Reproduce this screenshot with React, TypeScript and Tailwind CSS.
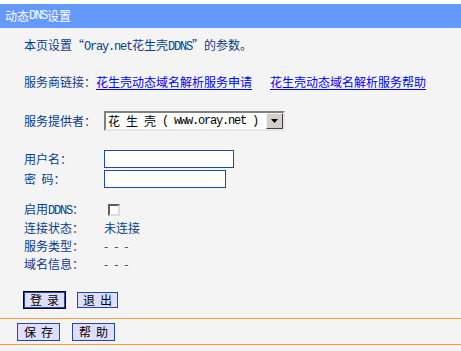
import React from 'react';

// half-width latin, like the router page's SimSun
const M: React.FC<{ children: React.ReactNode }> = ({ children }) => (
  <span className="text-[12px] whitespace-pre" style={{ fontFamily: '"Liberation Mono", monospace', letterSpacing: '-1.2px' }}>
    {children}
  </span>
);

const Label: React.FC<{ children: React.ReactNode }> = ({ children }) => (
  <div className="w-[80px] shrink-0 whitespace-nowrap">{children}</div>
);

const Btn: React.FC<{ text: string; focus?: boolean }> = ({ text, focus }) => (
  <div className={focus ? 'border border-black' : 'border border-transparent'}>
    <div className="w-[41px] h-[16px] border border-[#2346a8] bg-[#dedeff] text-black flex items-center justify-center whitespace-nowrap tracking-[5px] pl-[5px] leading-none">
      {text}
    </div>
  </div>
);

const BtnPlain: React.FC<{ text: string }> = ({ text }) => (
  <div className="w-[43px] h-[18px] border border-[#2346a8] bg-[#dedeff] text-black flex items-center justify-center whitespace-nowrap tracking-[5px] pl-[5px] leading-none">
    {text}
  </div>
);

const App: React.FC = () => {
  return (
    <div
      className="w-[461px] h-[351px] overflow-hidden bg-white pt-[4px] text-[12px] leading-[12px] text-[#0b3b8f]"
      style={{ fontFamily: '"Noto Sans CJK SC", "Liberation Sans", sans-serif' }}
    >
      <div className="h-[24px] bg-[#6699ff] text-white flex items-center pl-[5px]">
        动态<M>DNS</M>设置
      </div>

      <div className="h-[323px] bg-[#f4f4f4] flex flex-col">
        <div className="pl-[24px] mt-[11px] h-[12px] whitespace-nowrap">
          本页设置“<M>Oray.net</M>花生壳<M>DDNS</M>”的参数。
        </div>

        <div className="pl-[24px] mt-[25px] h-[12px] flex whitespace-nowrap">
          <span>服务商链接：</span>
          <a className="text-[#0000ff] underline underline-offset-2">花生壳动态域名解析服务申请</a>
          <a className="ml-[18px] text-[#0000ff] underline underline-offset-2">花生壳动态域名解析服务帮助</a>
        </div>

        <div className="pl-[24px] mt-[23px] h-[20px] flex items-center">
          <Label>服务提供者：</Label>
          <div className="w-[181px] h-[20px] border-2 border-t-[#808080] border-l-[#808080] border-r-[#e8e8e8] border-b-[#e8e8e8] bg-white flex items-center text-black">
            <div className="flex-1 pl-[2px] flex items-center whitespace-nowrap gap-[6px]">
              <span>花</span>
              <span>生</span>
              <span>壳</span>
              <M>{'( www.oray.net )'}</M>
            </div>
            <div className="w-[17px] h-[16px] shrink-0 bg-[#d4d0c8] border border-t-[#f0f0f0] border-l-[#f0f0f0] border-r-[#404040] border-b-[#404040] flex items-center justify-center">
              <svg width="7" height="4" viewBox="0 0 7 4">
                <path d="M0 0h7L3.5 4z" fill="#000" />
              </svg>
            </div>
          </div>
        </div>

        <div className="pl-[24px] mt-[19px] h-[18px] flex items-center">
          <Label>用户名：</Label>
          <div className="w-[130px] h-[18px] border border-[#1f48a6] bg-white" />
        </div>
        <div className="pl-[24px] mt-[2px] h-[18px] flex items-center">
          <Label>密&nbsp;&nbsp;码：</Label>
          <div className="w-[122px] h-[18px] border border-[#1f48a6] bg-white" />
        </div>

        <div className="pl-[24px] mt-[13px] h-[18px] flex items-center">
          <Label>
            启用<M>DDNS</M>：
          </Label>
          <div className="ml-[4px] w-[12px] h-[12px] border-2 border-t-[#606060] border-l-[#606060] border-r-[#dcdcdc] border-b-[#dcdcdc] bg-white" />
        </div>
        <div className="pl-[24px] h-[18px] flex items-center">
          <Label>连接状态：</Label>
          <span>未连接</span>
        </div>
        <div className="pl-[24px] h-[18px] flex items-center">
          <Label>服务类型：</Label>
          <span className="tracking-[6px]">---</span>
        </div>
        <div className="pl-[24px] h-[18px] flex items-center">
          <Label>域名信息：</Label>
          <span className="tracking-[6px]">---</span>
        </div>

        <div className="pl-[23px] mt-[18px] flex items-center gap-[10px]">
          <Btn text="登录" focus />
          <Btn text="退出" />
        </div>

        <div className="mt-[9px] h-px bg-[#ff9933]" />
        <div className="pl-[17px] h-[25px] flex items-center gap-[12px]">
          <BtnPlain text="保存" />
          <BtnPlain text="帮助" />
        </div>
        <div className="h-px bg-[#ff9933]" />
      </div>
    </div>
  );
};

export default App;
